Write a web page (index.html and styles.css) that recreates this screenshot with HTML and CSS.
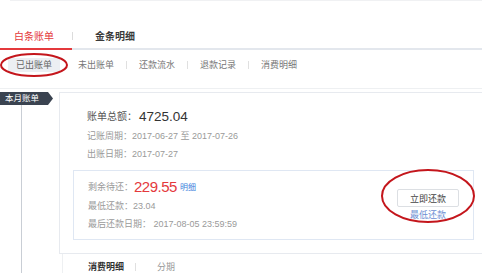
FILE: index.html
```html
<!DOCTYPE html>
<html lang="zh-CN">
<head>
<meta charset="utf-8">
<title>白条账单</title>
<link rel="stylesheet" href="styles.css">
</head>
<body>
<div class="page">
  <div class="topline"></div>
  <nav class="tabs">
    <div class="tab active">白条账单</div>
    <span class="tab-sep"></span>
    <div class="tab tab-gold">金条明细</div>
  </nav>
  <div class="subtabs">
    <span class="sub active">已出账单</span>
    <span class="sub sub-first">未出账单</span><i class="sep"></i>
    <span class="sub">还款流水</span><i class="sep"></i>
    <span class="sub">退款记录</span><i class="sep"></i>
    <span class="sub">消费明细</span>
  </div>
  <div class="bill">
    <div class="timeline">
      <div class="tag">本月账单</div>
      <div class="line"></div>
    </div>
    <div class="main">
      <div class="card">
        <div class="info">
          <div class="total"><span class="label">账单总额：</span><span class="amount">4725.04</span></div>
          <div class="meta">记账周期：2017-06-27 至 2017-07-26</div>
          <div class="meta">出账日期：2017-07-27</div>
        </div>
        <div class="repay">
          <div class="repay-info">
            <div class="remain"><span class="meta-label">剩余待还：</span><span class="due">229.55</span><a class="link">明细</a></div>
            <div class="meta">最低还款：23.04</div>
            <div class="meta">最后还款日期： 2017-08-05 23:59:59</div>
          </div>
          <div class="repay-actions">
            <button class="btn">立即还款</button>
            <a class="min-link">最低还款</a>
          </div>
        </div>
      </div>
      <div class="detail-tabs">
        <span class="dt active">消费明细</span><i class="sep dt-sep"></i><span class="dt">分期</span>
      </div>
    </div>
  </div>
  <svg class="annot" width="482" height="273" viewBox="0 0 482 273">
    <ellipse cx="34" cy="65" rx="33" ry="11" fill="none" stroke="#c4161c" stroke-width="2"/>
    <ellipse cx="428" cy="196" rx="46" ry="26" fill="none" stroke="#c4161c" stroke-width="2"/>
  </svg>
</div>
</body>
</html>
```

FILE: styles.css
```css
html, body {
  margin: 0;
  padding: 0;
  background: #fff;
}
body {
  font-family: "Liberation Sans", "Noto Sans CJK SC", sans-serif;
  color: #333;
}
.page {
  position: relative;
  width: 482px;
  height: 273px;
  overflow: hidden;
  display: flex;
  flex-direction: column;
}
.topline {
  height: 0;
  border-top: 1px solid #f0f1f3;
  margin-left: 10px;
}
.tabs {
  display: flex;
  align-items: flex-end;
  padding-top: 28px;
  border-bottom: 2px solid #e3e7ed;
}
.tab {
  font-size: 10px;
  line-height: 16px;
  padding-bottom: 3px;
  color: #333;
}
.tab.active {
  color: #e4393c;
  padding-left: 14px;
  width: 58px;
  border-bottom: 2px solid #e4393c;
  margin-bottom: -2px;
}
.tab-sep {
  width: 1px;
  height: 8px;
  background: #dcdcdc;
  margin-bottom: 8px;
}
.tab-gold {
  padding-left: 22px;
  font-weight: bold;
  color: #3a3a3a;
}
.subtabs {
  display: flex;
  align-items: center;
  padding: 8px 0 16px 8px;
  border-bottom: 1px solid #eef0f2;
}
.sub {
  font-size: 9px;
  line-height: 14px;
  padding: 0 8px;
  color: #777;
}
.sub.active {
  background: #eceff3;
  color: #666;
}
.sub-first {
  margin-left: 10px;
}
.sep {
  display: block;
  width: 1px;
  height: 8px;
  background: #e0e0e0;
  margin: 0 4px;
}
.bill {
  flex: 1;
  min-height: 0;
  display: flex;
  padding-top: 3px;
}
.timeline {
  width: 59px;
  flex: none;
  display: flex;
  flex-direction: column;
}
.tag {
  width: 48px;
  padding-right: 5px;
  box-sizing: content-box;
  height: 13px;
  line-height: 13px;
  font-size: 8.5px;
  color: #fff;
  background: #3a4350;
  text-indent: 5px;
  clip-path: polygon(0 0, 48px 0, 53px 50%, 48px 100%, 0 100%);
}
.line {
  flex: 1;
  width: 0;
  margin-left: 21px;
  border-left: 1px solid #c9ced5;
}
.main {
  flex: 1;
  display: flex;
  flex-direction: column;
}
.card {
  border: 1px solid #e7eaef;
  border-right: none;
  padding: 14px 0 13px 13px;
}
.info {
  padding-left: 14px;
}
.total {
  height: 20px;
  display: flex;
  align-items: center;
}
.label {
  font-size: 10px;
  line-height: 20px;
  color: #555;
  margin-right: 2px;
}
.amount {
  font-size: 13.5px;
  line-height: 20px;
  color: #333;
}
.meta {
  font-size: 9px;
  line-height: 18px;
  height: 18px;
  color: #9a9a9a;
}
.repay {
  margin-top: 7px;
  width: 401px;
  box-sizing: border-box;
  border: 1px solid #dfe7f3;
  display: flex;
  justify-content: space-between;
  padding: 6px 14px;
}
.remain {
  height: 20px;
  display: flex;
  align-items: center;
}
.meta-label {
  font-size: 9px;
  line-height: 20px;
  color: #9a9a9a;
}
.due {
  font-size: 15px;
  line-height: 20px;
  color: #e4393c;
  letter-spacing: -0.5px;
  margin-left: 1px;
}
.link {
  font-size: 8px;
  line-height: 20px;
  color: #3b7ddb;
  margin-left: 3px;
  padding-top: 1px;
}
.repay-actions {
  display: flex;
  flex-direction: column;
  align-items: center;
  padding-top: 12px;
}
.btn {
  width: 62px;
  height: 18px;
  padding: 0;
  border: 1px solid #dcdfe3;
  border-radius: 2px;
  background: #fff;
  font-family: inherit;
  font-size: 9px;
  color: #444;
}
.min-link {
  font-size: 9px;
  line-height: 16px;
  color: #6d8fd3;
}
.detail-tabs {
  flex: 1;
  display: flex;
  align-items: flex-start;
  margin-left: 3px;
  border-left: 1px solid #eef0f2;
  padding: 7px 0 0 25px;
}
.dt {
  font-size: 9px;
  line-height: 12px;
  color: #999;
}
.dt.active {
  color: #333;
  font-weight: bold;
}
.dt-sep {
  margin: 2px 21px 0 11px;
}
.annot {
  position: absolute;
  left: 0;
  top: 0;
  pointer-events: none;
}
```
